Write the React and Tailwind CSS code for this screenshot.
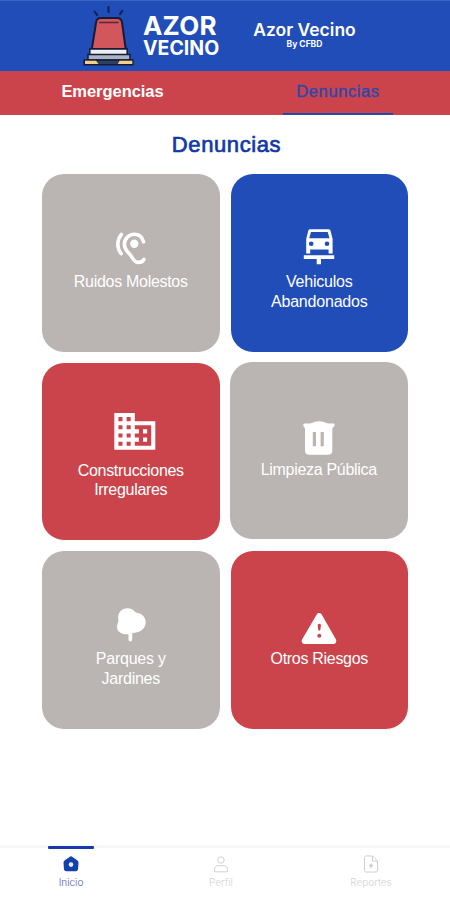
import React, { useState } from 'react'

const SirenLogo = () => (
  <svg className="w-14 h-[70px]" viewBox="80 0 56 70" fill="none">
    <g stroke="#10204f" strokeWidth={2} strokeLinecap="round">
      <path d="M94.5 10.5l2.7 3.7M108.5 6v5M122.3 9.8l-2.3 3.4" />
    </g>
    <path
      d="M96 22c.3-3.6 1.6-5 5-5h16c3.400 0 4.800 1.400 5.100 5l3.600 26H91.800z"
      fill="#d2575c"
      stroke="#171b33"
      strokeWidth={2}
      strokeLinejoin="round"
    />
    <path d="M99.500 21.600h18.500" stroke="#5d2440" strokeWidth={1.500} strokeLinecap="round" />
    <path d="M89.800 48h37.400v6H89.800z" fill="#eceef2" stroke="#171b33" strokeWidth={1.500} />
    <path d="M88 53.500h42v5.500h-42z" fill="#a9b4c4" stroke="#171b33" strokeWidth={1.500} />
    <path d="M84.200 59h48.600v4.700H84.200z" fill="#2c4064" stroke="#171b33" strokeWidth={1.500} />
    <path d="M85 59.700h11l2.500 3.300H85zM119.500 59.700h12.800v3.300h-14.500z" fill="#f3cf86" />
  </svg>
)

const EarIcon = () => (
  <g fill="none" stroke="white" strokeWidth={3.6} strokeLinecap="round">
    <path d="M34.500 15.800C33.300 11.200 29.800 8.300 25.300 8.300 19.800 8.300 15.400 12.900 15.400 18.300c0 3.700 2 6.700 4.900 9.500 3.200 3 4.200 8.400 8.600 8.600 3.200.1 5.200-.9 6.100-3.100" />
    <path d="M12.400 8.300c-4.700 5.900-4.700 13.800-.3 19.300" />
    <circle cx="25.300" cy="17.700" r="4.200" fill="white" stroke="none" />
  </g>
)

const CarIcon = () => (
  <path
    fill="white"
    fillRule="evenodd"
    d="M13.300 3.300h18c1.200 0 2 .6 2.300 1.700l2 8v14.500h-4V23.500H13.200v4h-4V13l2-8c.3-1.100 1-1.700 2.100-1.700zM14 6l-1.800 6.300h20.300L30.700 6zM14.200 15.400a2.300 2.300 0 1 0 0 4.600 2.300 2.300 0 0 0 0-4.600zM30 15.400a2.300 2.300 0 1 0 0 4.600 2.300 2.300 0 0 0 0-4.600zM6.800 29.200h30.400V33H24v5.300h-4.300V33H6.800z"
  />
)

const BuildingIcon = () => (
  <path
    fill="white"
    transform="translate(1.200 -8.200) scale(2.050)"
    d="M12 7V3H2v18h20V7H12zM6 19H4v-2h2v2zm0-4H4v-2h2v2zm0-4H4V9h2v2zm0-4H4V5h2v2zm4 12H8v-2h2v2zm0-4H8v-2h2v2zm0-4H8V9h2v2zm0-4H8V5h2v2zm10 12h-8v-2h2v-2h-2v-2h2v-2h-2V9h8v10zm-2-8h-2v2h2v-2zm0 4h-2v2h2v-2z"
  />
)

const TrashIcon = () => (
  <path
    fill="white"
    fillRule="evenodd"
    d="M7.500 9.500h4.500c2 0 3-.7 4.500-1.300 3.600-1.400 7.400-1.400 11 0 1.500.6 2.500 1.300 4.500 1.300h4.500c1.300 0 1.500 1.700.7 2.700-.8 1-1.900 1.600-1.900 3.200v21c0 2.900-1.500 4.400-4.300 4.400H12.300c-2.800 0-4.300-1.500-4.300-4.400v-21c0-1.600-.7-2.200-1.400-3.200-.7-1-.4-2.700.9-2.700zM15.800 18v14.300h3.200V18zM23.600 18v14.300h3.200V18z"
  />
)

const TreeIcon = () => (
  <path
    fill="white"
    d="M18.500 5.300c3.500 0 5.800 1.400 7.800 3.700 1 .9 2.200 1 3.400 1.300 4.200 1.100 7 4.600 7 8.900 0 5.300-4 9.300-9.500 10.300-1.500.3-3 .4-4 .8v6.500c0 2.300-3.700 2.300-3.700 0v-5.300c-1.300-.4-2.700 0-4.200-.3C11 30.500 8 27.800 8 24c0-2.700 1.200-4.200 1.300-6.300.1-1.500-.3-2.700-.1-4.400.6-4.700 4.300-8 9.300-8z"
  />
)

const WarningIcon = () => (
  <path
    fill="white"
    fillRule="evenodd"
    d="M19.700 11.500c1.200-2 3.800-2 5 0l14.100 24.700c1.300 2.300-.1 4.800-2.600 4.800h-28.400c-2.500 0-3.900-2.500-2.600-4.800zM22.300 20.800c-1.100 0-1.700.8-1.600 1.800l.5 4c.2 1.500 2 1.500 2.200 0l.5-4c.1-1-.5-1.800-1.600-1.800zM22.300 30.700a2 2 0 1 0 0 4 2 2 0 0 0 0-4z"
  />
)

const categories = [
  { id: 1, lines: ['Ruidos Molestos'], icon: EarIcon, className: 'bg-[#bab4b3] tracking-[-0.3px]' },
  { id: 2, lines: ['Vehiculos', 'Abandonados'], icon: CarIcon, className: 'bg-[#204db8] tracking-[-0.2px]' },
  { id: 3, lines: ['Construcciones', 'Irregulares'], icon: BuildingIcon, className: 'bg-[#cc444b] tracking-[-0.3px]' },
  { id: 4, lines: ['Limpieza Pública'], icon: TrashIcon, className: 'bg-[#bab4b3] -mt-[1px] mb-[1px] -ml-[0.5px] mr-[0.5px] tracking-[-0.3px]' },
  { id: 5, lines: ['Parques y', 'Jardines'], icon: TreeIcon, className: 'bg-[#bab4b3] tracking-[-0.25px]' },
  { id: 6, lines: ['Otros Riesgos'], icon: WarningIcon, className: 'bg-[#cc444b] tracking-[-0.3px]' }
]

const CategoryCard = ({ category }) => {
  const Icon = category.icon
  return (
    <button className={`flex flex-col items-center pt-[52px] rounded-[22px] text-white ${category.className}`}>
      <svg className="w-11 h-11 overflow-visible" viewBox="0 0 44 44">
        <Icon />
      </svg>
      <span className="mt-[2px] text-base leading-[19.5px] text-center">
        {category.lines.map(line => (
          <span key={line} className="block whitespace-nowrap">{line}</span>
        ))}
      </span>
    </button>
  )
}

const HomeIcon = () => (
  <svg className="w-4 h-4" viewBox="0 0 16 16">
    <path fill="#1440ae" d="M8 .3c.6 0 1 .2 1.500.6l5 3.700c.7.600 1 1.200 1 2l-.4 6c-.1 1.700-.8 2.600-2.400 2.600H3.300c-1.600 0-2.300-.9-2.400-2.600l-.4-6c0-.8.3-1.400 1-2l5-3.700C7 .500 7.400.3 8 .3z" />
    <circle cx="8" cy="8.600" r="2.300" fill="#e4efff" />
  </svg>
)

const ProfileIcon = () => (
  <svg className="w-4 h-[17px]" viewBox="0 0 16 17" fill="none" stroke="#d2d2d2">
    <circle cx="8" cy="4" r="3.200" />
    <path strokeLinejoin="round" d="M1.500 15.800v-2.200c0-2.500 1.300-3.900 3.500-3.900h6c2.200 0 3.500 1.400 3.500 3.900v2.200z" />
  </svg>
)

const ReportIcon = () => (
  <svg className="w-4 h-[18px]" viewBox="0 0 16 18" fill="none" stroke="#cfcfcf">
    <path strokeLinejoin="round" d="M3 1h6.500L14.500 6v9.500c0 .8-.7 1.500-1.500 1.500H3c-.8 0-1.500-.7-1.500-1.500v-13C1.500 1.700 2.200 1 3 1zM9.500 1v5h5" />
    <path strokeWidth={1.700} d="M8 8.700v4M6 10.700h4" />
  </svg>
)

const App = () => {
  const [activeTab, setActiveTab] = useState('denuncias')

  return (
    <div className="flex flex-col w-[450px] h-[900px] overflow-hidden bg-white font-['Liberation_Sans',sans-serif]">
      {/* Brand bar */}
      <header className="flex h-[71px] pl-20 bg-[#204db8] border-t border-[#3c63c0] text-white font-['Inter',sans-serif]">
        <SirenLogo />
        <div className="ml-[7px] pt-[12px] w-[78px] font-bold whitespace-nowrap">
          <div className="text-[26px] leading-[26px] tracking-[0.2px]">AZOR</div>
          <div className="text-[19.5px] leading-[18px] tracking-[0px]">VECINO</div>
        </div>
        <div className="ml-[31px] pt-[18px] w-[105px] text-center whitespace-nowrap">
          <div className="text-[17.5px] leading-[21px] font-semibold">Azor Vecino</div>
          <div className="text-[8.5px] leading-[9px] font-bold">By CFBD</div>
        </div>
      </header>

      {/* Section tabs */}
      <nav className="flex justify-between h-[43.5px] pl-[57px] pr-[57px] bg-[#cc444b] text-[16.5px] leading-5">
        <button
          onClick={() => setActiveTab('emergencias')}
          className="w-[111px] pb-[4px] font-bold text-white whitespace-nowrap tracking-[-0.05px]"
        >
          Emergencias
        </button>
        <button
          onClick={() => setActiveTab('denuncias')}
          className={`w-[110px] pb-[2px] whitespace-nowrap text-[#2c48ab] [-webkit-text-stroke:0.4px_#2c48ab] tracking-[0.6px] border-b-2 ${activeTab === 'denuncias' ? 'border-[#2748a8]' : 'border-transparent'}`}
        >
          Denuncias
        </button>
      </nav>

      <main className="flex-1">
        <h1 className="mt-4 pl-[3px] text-center text-[22px] leading-7 text-[#1239a8] [-webkit-text-stroke:0.7px_#1239a8] tracking-[0.6px]">
          Denuncias
        </h1>
        <div className="grid grid-cols-2 auto-rows-[177.5px] gap-x-[11px] gap-y-[11px] mt-[15.5px] ml-[42px] w-[366px]">
          {categories.map(category => (
            <CategoryCard key={category.id} category={category} />
          ))}
        </div>
      </main>

      {/* Bottom navigation */}
      <footer className="flex h-[55.5px] border-t-[3px] border-[#f7f7f7] text-[10px] leading-3 text-[#d3d3d3] font-['Inter',sans-serif] font-light">
        <div className="flex flex-col items-center ml-12 -mt-[2px] w-[46px] text-[#5261b6]">
          <div className="w-full h-[3px] rounded-[1px] bg-[#1a38ad]" />
          <div className="mt-[7px]"><HomeIcon /></div>
          <span className="mt-1">Inicio</span>
        </div>
        <div className="flex flex-col items-center ml-[104px] pt-2 w-[46px]">
          <ProfileIcon />
          <span className="mt-[3px]">Perfil</span>
        </div>
        <div className="flex flex-col items-center ml-[104px] pt-[7px] w-[46px]">
          <ReportIcon />
          <span className="mt-[3px]">Reportes</span>
        </div>
      </footer>
    </div>
  )
}

export default App
